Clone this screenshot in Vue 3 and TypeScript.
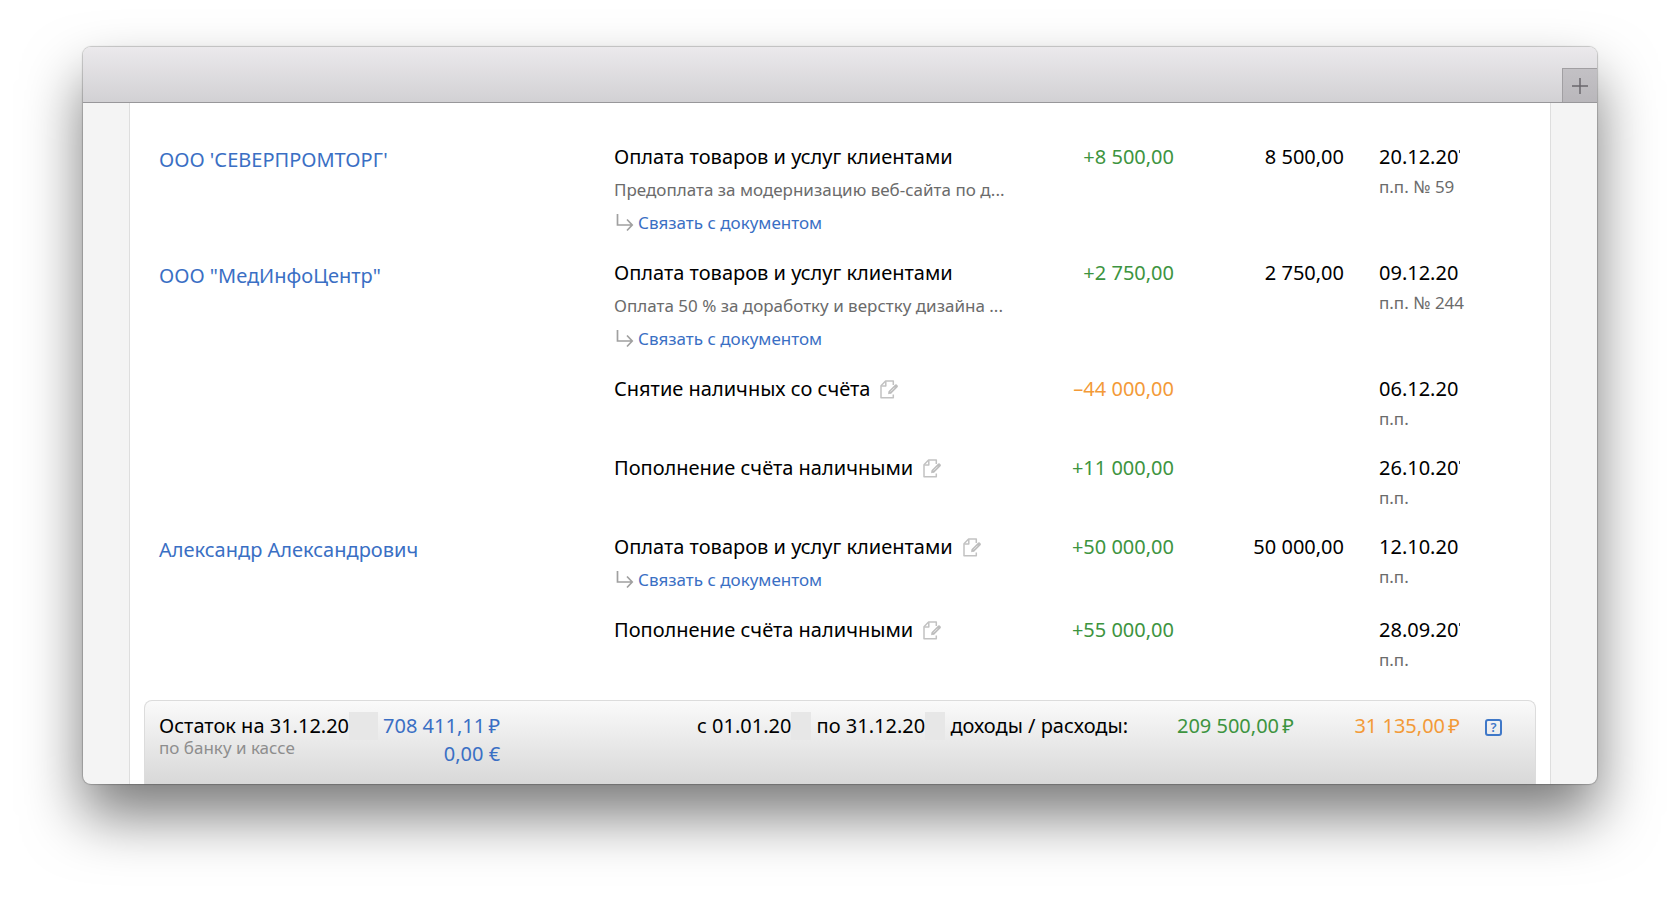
<script setup lang="ts">
interface Operation {
  party?: string
  title: string
  note?: string
  editable?: boolean
  linkable?: boolean
  amount: string
  outgoing?: boolean
  rest?: string
  date: string
  ticked?: boolean
  order: string
}

const operations: Operation[] = [
  {
    party: "ООО 'СЕВЕРПРОМТОРГ'",
    title: 'Оплата товаров и услуг клиентами',
    note: 'Предоплата за модернизацию веб-сайта по д...',
    linkable: true,
    amount: '+8 500,00',
    rest: '8 500,00',
    date: '20.12.20',
    ticked: true,
    order: 'п.п. № 59',
  },
  {
    party: 'ООО "МедИнфоЦентр"',
    title: 'Оплата товаров и услуг клиентами',
    note: 'Оплата 50 % за доработку и верстку дизайна ...',
    linkable: true,
    amount: '+2 750,00',
    rest: '2 750,00',
    date: '09.12.20',
    order: 'п.п. № 244',
  },
  {
    title: 'Снятие наличных со счёта',
    editable: true,
    amount: '–44 000,00',
    outgoing: true,
    date: '06.12.20',
    order: 'п.п.',
  },
  {
    title: 'Пополнение счёта наличными',
    editable: true,
    amount: '+11 000,00',
    date: '26.10.20',
    ticked: true,
    order: 'п.п.',
  },
  {
    party: 'Александр Александрович',
    title: 'Оплата товаров и услуг клиентами',
    editable: true,
    linkable: true,
    amount: '+50 000,00',
    rest: '50 000,00',
    date: '12.10.20',
    order: 'п.п.',
  },
  {
    title: 'Пополнение счёта наличными',
    editable: true,
    amount: '+55 000,00',
    date: '28.09.20',
    ticked: true,
    order: 'п.п.',
  },
]
</script>

<template>
  <div class="desktop">
    <div class="window">
      <header class="titlebar">
        <button class="add-tab" type="button" aria-label="Новая вкладка">
          <svg width="18" height="18" viewBox="0 0 18 18" aria-hidden="true">
            <path d="M9 1v16M1 9h16" fill="none" stroke="#6a676c" stroke-width="1.5" />
          </svg>
        </button>
      </header>

      <main class="page">
        <table class="operations">
          <colgroup>
            <col />
            <col class="col-title" />
            <col class="col-amount" />
            <col class="col-rest" />
            <col class="col-date" />
          </colgroup>
          <tbody>
            <tr v-for="(op, i) in operations" :key="i">
              <td class="party">
                <a v-if="op.party" href="#">{{ op.party }}</a>
              </td>
              <td>
                <div class="title">
                  <span>{{ op.title }}</span>
                  <button v-if="op.editable" class="edit" type="button" aria-label="Редактировать">
                    <svg width="18" height="19" viewBox="0 0 18 19" aria-hidden="true">
                      <g fill="none" stroke="#c2c2c2" stroke-width="1.5" stroke-linejoin="round">
                        <path d="M13.3 5V1H5.6L1 5.8V17.8h12.3V14.4" />
                        <path d="M5.8 1.2V6H1.2" />
                      </g>
                      <path
                        d="M16 6.2L10.3 11.9"
                        stroke="#bdbdbd"
                        stroke-width="3.6"
                        stroke-linecap="round"
                      />
                      <path d="M9.2 10.4l2.6 2.6-3.8 1.3z" fill="#bdbdbd" />
                      <path d="M10.6 11.6l4-4" stroke="#e8e8e8" stroke-width="1" />
                    </svg>
                  </button>
                </div>
                <div v-if="op.note" class="note">{{ op.note }}</div>
                <div v-if="op.linkable" class="bind">
                  <svg width="18" height="18" viewBox="0 0 18 18" aria-hidden="true">
                    <path
                      d="M1.5 0v11H16M11 5.5l5.2 5.5-5.2 5.5"
                      fill="none"
                      stroke="#a0a0a0"
                      stroke-width="1.7"
                    />
                  </svg>
                  <a href="#">Связать с документом</a>
                </div>
              </td>
              <td class="money" :class="op.outgoing ? 'expense' : 'income'">{{ op.amount }}</td>
              <td class="money">{{ op.rest }}</td>
              <td class="when">
                <div class="date" :class="{ ticked: op.ticked }">{{ op.date }}</div>
                <div class="order">{{ op.order }}</div>
              </td>
            </tr>
          </tbody>
        </table>

        <footer class="summary">
          <div class="balance-label">
            <div>Остаток на 31.12.20<span class="mask"></span></div>
            <div class="hint">по банку и кассе</div>
          </div>
          <div class="balance">
            <a href="#">708 411,11&thinsp;₽</a>
            <a href="#">0,00 €</a>
          </div>
          <div class="period">
            с 01.01.20<span class="mask small"></span> по 31.12.20<span class="mask small"></span>
            доходы / расходы:
          </div>
          <div class="total income">209 500,00&thinsp;₽</div>
          <div class="total expense">31 135,00&thinsp;₽</div>
          <button class="help" type="button" aria-label="Справка">?</button>
        </footer>
      </main>
    </div>
  </div>
</template>

<style>
body {
  margin: 0;
  background: #fff;
}
</style>

<style scoped>
.desktop {
  box-sizing: border-box;
  padding: 47px 83px 118px;
  overflow: hidden;
  font-family: 'Noto Sans', 'Open Sans', sans-serif;
  font-size: 20px;
  line-height: 28px;
  color: #000;
}

.window {
  border-radius: 8px;
  background: #f4f4f4;
  overflow: hidden;
  box-shadow:
    0 0 1px 1px rgba(0, 0, 0, 0.2),
    0 32px 58px rgba(0, 0, 0, 0.52);
}

.titlebar {
  box-sizing: border-box;
  display: flex;
  justify-content: flex-end;
  align-items: flex-end;
  height: 56px;
  border-bottom: 1px solid #98979a;
  background: linear-gradient(#ebe9ec, #d2d1d4);
}

button {
  padding: 0;
  border: 0;
  background: none;
  font: inherit;
  cursor: pointer;
}

.add-tab {
  display: flex;
  align-items: center;
  justify-content: center;
  width: 35px;
  height: 34px;
  border-top: 1px solid #a19fa2;
  border-left: 1px solid #a19fa2;
  background: linear-gradient(#c3c1c5, #b9b7bb);
}

.page {
  margin: 0 46px;
  padding: 40px 14px 0;
  border: solid #dedede;
  border-width: 0 1px;
  background: #fff;
}

.operations {
  width: 100%;
  table-layout: fixed;
  border-collapse: collapse;
}

.col-title {
  width: 401px;
}

.col-amount {
  width: 159px;
}

.col-rest {
  width: 170px;
}

.col-date {
  width: 192px;
}

td {
  padding: 0 0 21px;
  vertical-align: top;
  white-space: nowrap;
}

.party {
  padding-left: 15px;
  line-height: 34px;
}

a {
  color: #3a6fc4;
  text-decoration: none;
}

.title {
  display: flex;
  align-items: center;
  gap: 10px;
}

.edit {
  display: flex;
}

.note,
.order {
  font-size: 17px;
  color: #6b6b6b;
}

.note {
  line-height: 33px;
  margin-top: 2px;
  margin-bottom: -2px;
}

.bind {
  display: flex;
  align-items: center;
  gap: 4px;
  margin-top: 2px;
  margin-bottom: -2px;
  padding-left: 2px;
  font-size: 17px;
  line-height: 34px;
}

.money {
  text-align: right;
}

.income {
  color: #3d9440;
}

.expense {
  color: #f39a38;
}

.when {
  padding-left: 35px;
}

.ticked::after {
  content: '';
  display: inline-block;
  width: 1px;
  height: 3px;
  margin: 0 0 11px 1px;
  background: #444;
}

.order {
  margin-top: 2px;
}

.summary {
  box-sizing: border-box;
  display: flex;
  min-height: 84px;
  margin-top: 5px;
  padding: 11px 33px 0 14px;
  border: solid #dcdcdc;
  border-width: 1px 1px 0;
  border-radius: 8px 8px 0 0;
  background: linear-gradient(#fafafa, #d8d8d8);
  white-space: nowrap;
}

.hint {
  margin-top: -2px;
  font-size: 17px;
  line-height: 20px;
  color: #8e8e8e;
}

.mask {
  display: inline-block;
  width: 29px;
  height: 28px;
  background: #e7e7e7;
  vertical-align: top;
}

.mask.small {
  width: 20px;
}

.balance {
  display: flex;
  flex-direction: column;
  align-items: flex-end;
  margin-left: 5px;
}

.period {
  margin-left: auto;
}

.total {
  width: 166px;
  text-align: right;
}

.help {
  box-sizing: border-box;
  width: 17px;
  height: 17px;
  margin: 7px 0 0 25px;
  border: 2px solid #3f78c8;
  border-radius: 3px;
  font-size: 13px;
  font-weight: 600;
  line-height: 13px;
  color: #3f78c8;
}
</style>
